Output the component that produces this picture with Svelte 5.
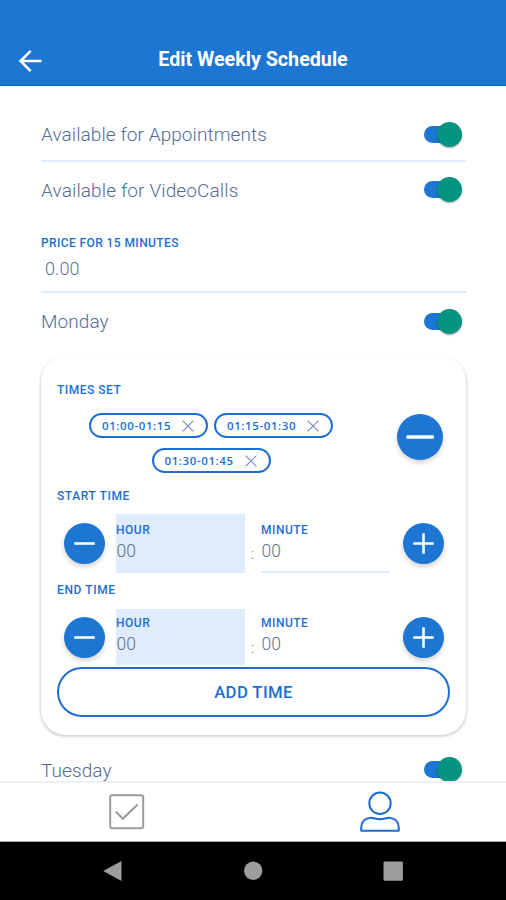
<script>
  const times = ['01:00-01:15', '01:15-01:30', '01:30-01:45'];
  const ranges = [
    { id: 'start', title: 'START TIME' },
    { id: 'end', title: 'END TIME' }
  ];
</script>

{#snippet toggle()}
  <span class="toggle"><span class="knob"></span></span>
{/snippet}

{#snippet round(kind, size)}
  <button class="round {size}" aria-label={kind}>
    <svg viewBox="0 0 40 40">
      <path d={kind === 'add' ? 'M10 20H30M20 10V30' : size === 'big' ? 'M8.2 20H32' : 'M10 20H30'} />
    </svg>
  </button>
{/snippet}

<div class="screen">
  <header>
    <svg class="back" viewBox="0 0 24 24"><path d="M23.500 12H2.500M12.700 1.8L2.500 12l10.2 10.2" /></svg>
    <h1>Edit Weekly Schedule</h1>
  </header>

  <main>
    <div class="row first"><span>Available for Appointments</span>{@render toggle()}</div>
    <div class="row second"><span>Available for VideoCalls</span>{@render toggle()}</div>
    <div class="price">
      <span class="label">PRICE FOR 15 MINUTES</span>
      <span class="value">0.00</span>
    </div>
    <div class="row day"><span>Monday</span>{@render toggle()}</div>

    <section class="card">
      <div class="label times-title">TIMES SET</div>
      <div class="times">
        <div class="chips">
          {#each times as time}
            <span class="chip">
              <span>{time}</span>
              <svg viewBox="0 0 12 12"><path d="M.6.6l10.8 10.8M11.4.6L.6 11.4" /></svg>
            </span>
          {/each}
        </div>
        {@render round('remove', 'big')}
      </div>
      {#each ranges as range}
        <div class="range {range.id}">
          <div class="label">{range.title}</div>
          <div class="fields">
            {@render round('remove', 'small')}
            <div class="field hour"><span class="label">HOUR</span><span class="value">00</span></div>
            <span class="colon">:</span>
            <div class="field minute"><span class="label">MINUTE</span><span class="value">00</span></div>
            {@render round('add', 'small')}
          </div>
        </div>
      {/each}
      <button class="add">ADD TIME</button>
    </section>

    <div class="row tuesday"><span>Tuesday</span>{@render toggle()}</div>
  </main>

  <nav class="tabs">
    <div>
      <svg width="36" height="36" viewBox="0 0 36 36" fill="none" stroke="#9b9b9b">
        <rect x="1.2" y="1.2" width="33" height="33" rx="2" stroke-width="2" />
        <path d="M6.8 17.5l7 7.3L28.6 10.5" stroke-width="2" />
      </svg>
    </div>
    <div>
      <svg width="42" height="42" viewBox="0 0 42 42" fill="none" stroke="#1b6cd2" stroke-width="2">
        <circle cx="21" cy="12.3" r="10.7" />
        <path d="M2.2 39.7v-3.2c0-5.6 3.8-9.4 9.4-9.7 3.4-.1 5.2 1.4 9.4 1.4s6-1.500 9.4-1.4c5.6.3 9.4 4.1 9.4 9.7v3.2z" stroke-linejoin="round" />
      </svg>
    </div>
  </nav>

  <footer>
    <div><svg width="20" height="22" viewBox="0 0 20 22"><path d="M18.500 1v20L.2 11z" /></svg></div>
    <div><svg width="20" height="20" viewBox="0 0 20 20"><circle cx="10.200" cy="9.800" r="9.200" /></svg></div>
    <div><svg width="20" height="20" viewBox="0 0 20 20"><rect x=".5" y=".5" width="19.400" height="19.300" rx="1.200" /></svg></div>
  </footer>
</div>

<style>
  :global(body) { margin: 0; }
  .screen {
    width: 506px;
    height: 900px;
    display: flex;
    flex-direction: column;
    overflow: hidden;
    background: #fff;
    font-family: Roboto, "Liberation Sans", sans-serif;
  }
  .screen * { box-sizing: border-box; }
  button { padding: 0; border: 0; font-family: inherit; }
  header {
    flex: none;
    height: 86px;
    padding-top: 34px;
    display: grid;
    grid-template-columns: 60px 1fr 60px;
    align-items: center;
    background: #1e76d3;
    border-bottom: 1px solid #0b64c5;
  }
  .back {
    width: 24px;
    height: 24px;
    margin: 2px 0 0 18px;
    fill: none;
    stroke: #fff;
    stroke-width: 2.5;
  }
  h1 {
    margin: 0;
    text-align: center;
    color: #fff;
    font-size: 19.700px;
    font-weight: 700;
    line-height: 24px;
    white-space: nowrap;
  }
  main {
    height: 695px;
    flex: none;
    padding: 21px 40px 0 41px;
    overflow: hidden;
  }
  .row {
    display: flex;
    align-items: center;
    justify-content: space-between;
    padding-right: 4px;
    color: #526b98;
    font-size: 19px;
    font-weight: 300;
    letter-spacing: .08px;
    line-height: 24px;
    white-space: nowrap;
  }
  .row > span:first-child { padding-top: 2px; }
  .first { height: 55px; padding-top: 1px; border-bottom: 2px solid #e0ecfa; }
  .second { height: 54px; }
  .second > span:first-child { padding-top: 4px; letter-spacing: .13px; }
  .day { height: 56px; }
  .tuesday { height: 55px; margin-top: 7px; line-height: 20px; }
  .toggle {
    width: 38px;
    height: 17px;
    display: flex;
    align-items: center;
    justify-content: flex-end;
    border-radius: 9px;
    background: linear-gradient(90deg, #1e76d3 65%, transparent 65%);
  }
  .knob {
    flex: none;
    width: 25px;
    height: 25px;
    border-radius: 50%;
    background: #059480;
    box-shadow: 0 1px 2px rgba(0, 0, 0, .35);
  }
  .label {
    display: block;
    color: #1c6fd1;
    font-size: 12px;
    font-weight: 500;
    line-height: 14px;
    letter-spacing: .5px;
    white-space: nowrap;
  }
  .value {
    display: block;
    color: #60718f;
    font-size: 18px;
    line-height: 20px;
  }
  .price {
    height: 77px;
    padding-top: 20px;
    border-bottom: 2px solid #e0ecfa;
  }
  .price .label { letter-spacing: .4px; }
  .price .value { margin: 9px 0 0 4px; font-weight: 300; letter-spacing: .1px; }
  .card {
    height: 379px;
    margin-top: 7px;
    padding: 27px 16px 0 16px;
    display: flex;
    flex-direction: column;
    border-radius: 25px;
    background: #fff;
    box-shadow: 0 1.500px 2.500px .5px rgba(0, 0, 0, .17);
  }
  .times-title { flex: none; }
  .times {
    flex: none;
    height: 76px;
    margin-top: 9px;
    display: flex;
  }
  .chips {
    width: 308px;
    padding-top: 7px;
    display: flex;
    flex-wrap: wrap;
    justify-content: center;
    align-content: flex-start;
    gap: 10px 6px;
  }
  .chip {
    width: 119px;
    height: 25px;
    padding: 0 12px 0 11px;
    display: flex;
    align-items: center;
    justify-content: space-between;
    border: 2px solid #1c6fd1;
    border-radius: 13px;
    color: #1c6fd1;
    font-family: "Open Sans", sans-serif;
    font-size: 11.500px;
    font-weight: 600;
    letter-spacing: .6px;
    line-height: 16px;
    white-space: nowrap;
  }
  .chip svg { width: 12px; height: 12px; fill: none; stroke: #7586c9; stroke-width: 1.1; }
  .round {
    flex: none;
    border-radius: 50%;
    background: #1e76d3;
    box-shadow: 0 3px 5px rgba(0, 0, 0, .17);
  }
  .round svg { display: block; width: 100%; height: 100%; fill: none; stroke: #fff; stroke-width: 2.5; }
  .big { width: 46px; height: 46px; margin: 8px 0 0 32px; }
  .big svg { stroke-width: 3; }
  .small { width: 41px; height: 41px; }
  .range { flex: none; padding-top: 7px; }
  .start { height: 94px; }
  .end { height: 91px; }
  .range > .label { letter-spacing: .6px; }
  .fields {
    height: 59px;
    margin: 11px 0 0 7px;
    display: flex;
    align-items: center;
  }
  .field { height: 59px; width: 129px; padding-top: 9px; }
  .field .value { margin: 4px 0 0 .5px; font-size: 17.500px; font-weight: 300; letter-spacing: .1px; }
  .hour { margin-left: 11px; background: #dfecfb; }
  .minute { border-bottom: 2px solid #e0ecfa; margin-right: 13px; }
  .colon { width: 16px; padding: 21px 0 0 6px; color: #1c6fd1; font-size: 14px; font-weight: 300; }
  .end .fields { height: 56px; margin-top: 12px; }
  .end .field { height: 56px; padding-top: 7px; border-bottom: 0; }
  .add {
    flex: none;
    height: 50px;
    border: 2px solid #1c6fd1;
    border-radius: 25px;
    background: #fff;
    color: #1c6fd1;
    font-size: 16.700px;
    font-weight: 500;
    letter-spacing: .4px;
  }
  .tabs {
    flex: none;
    height: 61px;
    display: grid;
    grid-template-columns: 1fr 1fr;
    place-items: center;
    border-top: 2px solid #eef1f1;
    border-bottom: 1px solid #aaa;
    background: #fff;
  }
  .tabs svg { display: block; }
  footer {
    flex: none;
    height: 58px;
    padding: 0 43px;
    display: grid;
    grid-template-columns: 1fr 1fr 1fr;
    place-items: center;
    background: #000;
    fill: #9d9d9d;
  }
  footer svg { display: block; }
</style>
